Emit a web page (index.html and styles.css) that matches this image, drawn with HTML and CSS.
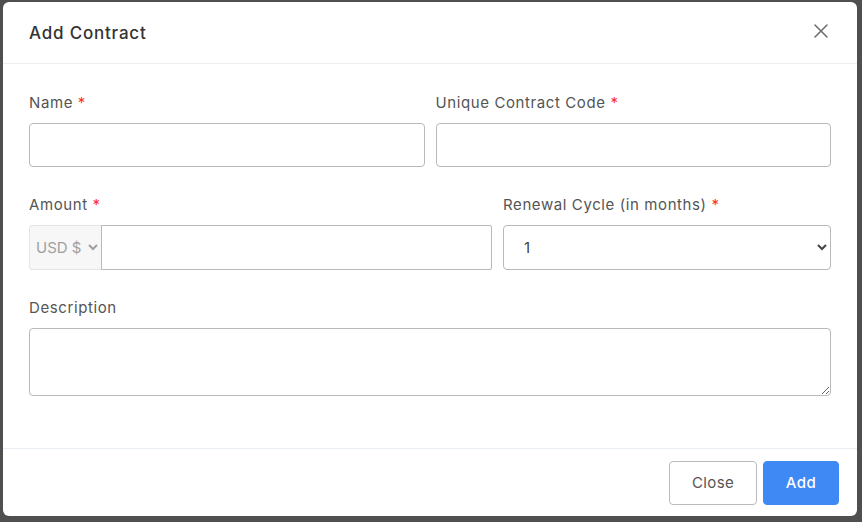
FILE: index.html
```html
<!DOCTYPE html>
<html lang="en">
<head>
<meta charset="utf-8">
<title>Add Contract</title>
<link rel="stylesheet" href="styles.css">
</head>
<body>
<div class="modal">
  <div class="modal-header">
    <h5 class="modal-title">Add Contract</h5>
    <button class="btn-close" type="button" aria-label="Close">
      <svg width="14" height="14" viewBox="0 0 14 14"><path d="M1 1 L13 13 M13 1 L1 13" stroke="#6b6b6b" stroke-width="1.5" fill="none" stroke-linecap="round"/></svg>
    </button>
  </div>
  <div class="modal-body">
    <div class="row row-half">
      <div class="field">
        <label class="label">Name <span class="req">*</span></label>
        <input class="input" type="text">
      </div>
      <div class="field">
        <label class="label">Unique Contract Code <span class="req">*</span></label>
        <input class="input" type="text">
      </div>
    </div>
    <div class="row row-amount">
      <div class="field">
        <label class="label">Amount <span class="req">*</span></label>
        <div class="input-group">
          <select class="currency"><option>USD $</option></select>
          <input class="input input-amount" type="text">
        </div>
      </div>
      <div class="field">
        <label class="label">Renewal Cycle (in months) <span class="req">*</span></label>
        <select class="input select"><option>1</option></select>
      </div>
    </div>
    <div class="field">
      <label class="label">Description</label>
      <textarea class="input textarea"></textarea>
    </div>
  </div>
  <div class="modal-footer">
    <button class="btn btn-outline" type="button">Close</button>
    <button class="btn btn-primary" type="button">Add</button>
  </div>
</div>
</body>
</html>
```
FILE: styles.css
```css
html, body {
  margin: 0;
  padding: 0;
}
body {
  background: #4f4f4f;
  font-family: "Inter", "Noto Sans", sans-serif;
  color: #555;
  width: 862px;
  height: 522px;
  overflow: hidden;
}
.modal {
  margin: 2px 0 0 3px;
  width: 854px;
  height: 514px;
  background: #fff;
  border-radius: 6px;
  display: flex;
  flex-direction: column;
}
.modal-header {
  border-bottom: 1px solid #eceef2;
  display: flex;
  align-items: center;
  justify-content: space-between;
  padding: 0 26px 0 26px;
  box-sizing: border-box;
  flex: none;
  height: 62px;
}
.modal-title {
  margin: 0;
  font-size: 17px;
  font-weight: 500;
  letter-spacing: 0.8px;
  color: #333;
}
.btn-close {
  border: 0;
  background: none;
  padding: 0;
  width: 14px;
  height: 14px;
  margin-top: -4px;
  margin-right: 3px;
  display: flex;
}
.modal-body {
  flex: 1;
  padding: 28px 26px 0 26px;
}
.row {
  display: grid;
  column-gap: 11px;
  margin-bottom: 27px;
}
.row-half {
  grid-template-columns: 1fr 1fr;
}
.row-amount {
  grid-template-columns: 463px 1fr;
}
.field {
  display: flex;
  flex-direction: column;
}
.label {
  font-size: 15px;
  line-height: 22px;
  letter-spacing: 0.6px;
  color: #555;
  margin-bottom: 9px;
}
.req {
  color: #ff2b2b;
}
.input {
  box-sizing: border-box;
  height: 44px;
  border: 1px solid #b9b9b9;
  border-radius: 4px;
  background: #fff;
  font-family: inherit;
  font-size: 15px;
  color: #444;
  outline: none;
}
.input-group {
  display: flex;
  height: 45px;
}
.currency {
  width: 72px;
  box-sizing: border-box;
  height: 45px;
  border: 1px solid #e4e4e4;
  border-right: 0;
  border-radius: 4px 0 0 4px;
  background: #f7f7f7;
  color: #a0a0a0;
  font-family: inherit;
  font-size: 15px;
  padding: 0 2px;
}
.input-amount {
  flex: 1;
  height: 45px;
  border-radius: 0 2px 2px 0;
}
.select {
  height: 45px;
  padding: 0 8px 0 16px;
}
.textarea {
  height: 68px;
  resize: vertical;
}
.modal-footer {
  flex: none;
  height: 68px;
  border-top: 1px solid #e8eef4;
  box-sizing: border-box;
  display: flex;
  justify-content: flex-end;
  align-items: center;
  gap: 6px;
  padding: 0 18px 0 0;
}
.btn {
  height: 44px;
  border-radius: 4px;
  font-family: inherit;
  font-size: 15px;
  letter-spacing: 0.4px;
  padding: 0;
}
.btn-outline {
  width: 88px;
  background: #fff;
  border: 1px solid #bbb;
  color: #555;
}
.btn-primary {
  width: 76px;
  background: #3e89f3;
  border: 1px solid #3e89f3;
  color: #fff;
  font-weight: 500;
}
```
